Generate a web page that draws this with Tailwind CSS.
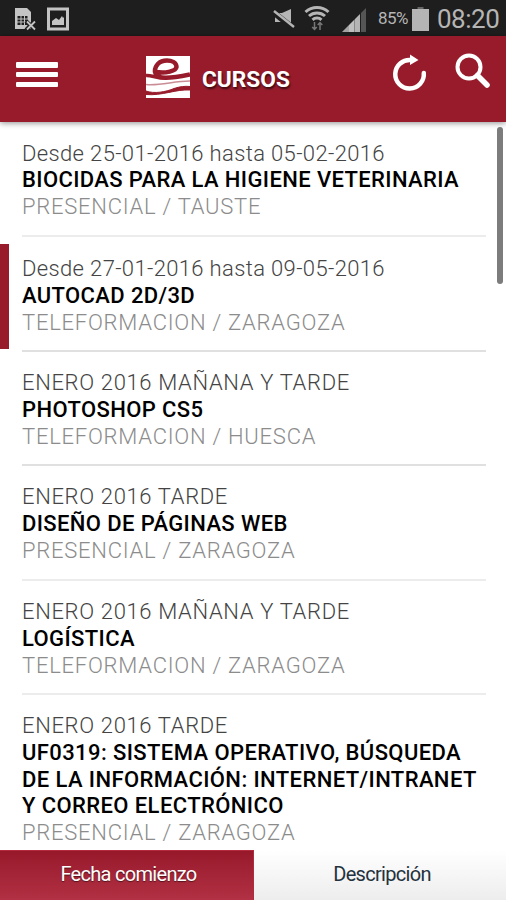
<!DOCTYPE html>
<html lang="es">
<head>
    <meta charset="UTF-8">
    <meta name="viewport" content="width=device-width, initial-scale=1.0">
    <title>Cursos</title>
    <script src="https://cdn.jsdelivr.net/npm/@tailwindcss/browser@4"></script>
</head>
<body class="bg-white font-[Roboto,sans-serif]">
    <div class="relative flex flex-col h-[900px] w-[506px] overflow-hidden">
        <!-- Status bar -->
        <div class="flex h-9 shrink-0 items-center bg-[#1e1e1e] text-[#b5b5b5]">
            <svg class="ml-3.5 mt-0.5 h-6 w-[22px]" viewBox="0 0 22 24">
                <path d="M1 1h12l4 4v17H1z" fill="#c4c4c4"/>
                <path d="M3.5 9h10v9h-10z" fill="#1e1e1e"/>
                <path d="M3 12h11M3 15h11M7 8v10M10.500 8v10" stroke="#c4c4c4" stroke-width="1"/>
                <path d="M12 14l9 9M21 14l-9 9" stroke="#1e1e1e" stroke-width="4"/>
                <path d="M13 14.500l8 8M21 14.500l-8 8" stroke="#c4c4c4" stroke-width="1.800"/>
            </svg>
            <svg class="ml-[11px] mt-0.5 h-6 w-[22px]" viewBox="0 0 22 24">
                <path d="M1.500 2h19v20h-19z" fill="none" stroke="#c4c4c4" stroke-width="3"/>
                <path d="M5 18v-4l4-3 3 2 3-4 1 2 1-1v8z" fill="#c4c4c4"/>
            </svg>
            <svg class="ml-[204px] h-6 w-[22px]" viewBox="0 0 22 24">
                <path d="M2 7h7l9-4v17l-9-4H2z" fill="#b5b5b5"/>
                <path d="M0 6l20 16" stroke="#1e1e1e" stroke-width="6"/>
                <path d="M1 5l20 16" stroke="#b5b5b5" stroke-width="2.500"/>
            </svg>
            <svg class="ml-[9px] h-[26px] w-[26px]" viewBox="0 0 26 26">
                <g fill="none" stroke="#b5b5b5" stroke-width="3">
                    <path d="M1.500 7a17 17 0 0 1 23 0"/>
                    <path d="M5 11a12 12 0 0 1 16 0"/>
                    <path d="M8.500 14.800a6.500 6.500 0 0 1 9 0"/>
                </g>
                <path d="M10.500 17v7M8.200 22l2.300 2.500 2.300-2.500M16 25v-7M13.700 20l2.300-2.500 2.300 2.500" fill="none" stroke="#777" stroke-width="1.500"/>
            </svg>
            <svg class="ml-3 mt-1 h-6 w-[26px]" viewBox="0 0 26 24">
                <path d="M0 24l7-7v7z" fill="#a5a5a5"/>
                <path d="M7 17l5-5v12H7z" fill="#c0c0c0"/>
                <path d="M12 12l1-1v13h-1z" fill="#888"/>
                <path d="M13 11l5-5v18h-5z" fill="#b5b5b5"/>
                <path d="M19 5l5-5v24h-5z" fill="#555"/>
            </svg>
            <span class="ml-[10px] mt-0.5 w-[34px] text-[17px] tracking-[-0.6px]">85%</span>
            <svg class="mt-0.5 h-6 w-[17px]" viewBox="0 0 17 24">
                <path d="M5.500 0h6v2h-6z" fill="#666"/>
                <path d="M0 2h17v22H0z" fill="#b5b5b5"/>
            </svg>
            <span class="ml-2 mt-px text-[26px] leading-9 tracking-[-0.5px]">08:20</span>
        </div>

        <!-- Header -->
        <header class="relative z-10 flex h-[86px] shrink-0 bg-[#981b2b] shadow-[0_1px_6px_rgba(0,0,0,0.45)]">
            <div class="ml-4 mt-[26px] flex h-[25px] w-[42px] flex-col justify-between">
                <div class="h-[5.500px] rounded-[1px] bg-white"></div>
                <div class="h-[5.500px] rounded-[1px] bg-white"></div>
                <div class="h-[5.500px] rounded-[1px] bg-white"></div>
            </div>
            <svg class="ml-[88px] mt-5 h-[42px] w-[44px]" viewBox="0 0 44 42">
                <path d="M0 0h44v42H0z" fill="#fff"/>
                <g fill="none" stroke="#981b2b">
                    <path d="M10 16C20 17.500 30 15 30.500 11C30.500 6 25 4.500 21 4.500C13 4.500 8.500 10 9 16C10 24 24 22.500 44 18.500" stroke-width="4.500"/>
                    <path d="M0 19.500C6 19 10 22.500 20 22" stroke-width="3.500"/>
                    <path d="M0 28.500C14 30 28 25 44 25" stroke-width="1.500" opacity="0.500"/>
                    <path d="M0 35C8 38 20 36 28 32.500C34 30.500 39 30 44 30.500V34C30 33 16 40 0 38.500z" fill="#981b2b" stroke-width="1"/>
                </g>
            </svg>
            <h1 class="ml-3 mt-[30px] w-[88px] text-[22.700px] leading-[27px] font-bold text-white [text-shadow:1px_2px_2px_rgba(0,0,0,0.6)]">CURSOS</h1>
            <svg class="ml-[101px] mt-4 h-10 w-9" viewBox="0 0 36 40">
                <path d="M20 8A14.300 14.300 0 1 0 32.800 21" fill="none" stroke="#fff" stroke-width="4.500" stroke-linecap="round"/>
                <path d="M19 2.500l8.500 5.500-8.500 5z" fill="#fff"/>
            </svg>
            <svg class="ml-[28px] mt-4 h-9 w-9" viewBox="0 0 36 36">
                <circle cx="14" cy="15" r="11.500" fill="none" stroke="#fff" stroke-width="4"/>
                <path d="M22.500 23.500l9.500 9.500" stroke="#fff" stroke-width="5.500" stroke-linecap="round"/>
            </svg>
        </header>

        <!-- Course list -->
        <main class="relative h-[728px] shrink-0 overflow-hidden text-[22px] leading-[26.800px]">
            <ul>
                <li class="mr-5 ml-[22px] h-[115px] border-b-2 border-[#ececec] pt-[18.500px]">
                    <p><span class="font-light tracking-[0.36px] text-[#444]">Desde 25-01-2016 hasta 05-02-2016</span></p>
                    <p><span class="font-medium tracking-[0.38px] text-black">BIOCIDAS PARA LA HIGIENE VETERINARIA</span></p>
                    <p><span class="font-light tracking-[0.75px] text-[#8c8c8c]">PRESENCIAL / TAUSTE</span></p>
                </li>
                <li class="relative mr-5 ml-[22px] h-[114.500px] border-b-2 border-[#e0e0e0] pt-[19px]">
                    <div class="absolute -left-[22px] top-[7px] h-[105px] w-[9px] bg-[#981b2b]"></div>
                    <p><span class="font-light tracking-[0.36px] text-[#444]">Desde 27-01-2016 hasta 09-05-2016</span></p>
                    <p><span class="font-medium tracking-[0.38px] text-black">AUTOCAD 2D/3D</span></p>
                    <p><span class="font-light tracking-[0.75px] text-[#8c8c8c]">TELEFORMACION / ZARAGOZA</span></p>
                </li>
                <li class="mr-5 ml-[22px] h-[114.500px] border-b-2 border-[#e0e0e0] pt-[18.500px]">
                    <p><span class="font-light tracking-[0.65px] text-[#444]">ENERO 2016 MAÑANA Y TARDE</span></p>
                    <p><span class="font-medium tracking-[0.38px] text-black">PHOTOSHOP CS5</span></p>
                    <p><span class="font-light tracking-[0.75px] text-[#8c8c8c]">TELEFORMACION / HUESCA</span></p>
                </li>
                <li class="mr-5 ml-[22px] h-[114.500px] border-b-2 border-[#ececec] pt-[18px]">
                    <p><span class="font-light tracking-[0.65px] text-[#444]">ENERO 2016 TARDE</span></p>
                    <p><span class="font-medium tracking-[0.38px] text-black">DISEÑO DE PÁGINAS WEB</span></p>
                    <p><span class="font-light tracking-[0.75px] text-[#8c8c8c]">PRESENCIAL / ZARAGOZA</span></p>
                </li>
                <li class="mr-5 ml-[22px] h-[114.500px] border-b-2 border-[#ececec] pt-[18.500px]">
                    <p><span class="font-light tracking-[0.65px] text-[#444]">ENERO 2016 MAÑANA Y TARDE</span></p>
                    <p><span class="font-medium tracking-[0.38px] text-black">LOGÍSTICA</span></p>
                    <p><span class="font-light tracking-[0.75px] text-[#8c8c8c]">TELEFORMACION / ZARAGOZA</span></p>
                </li>
                <li class="mr-5 ml-[22px] pt-[18px]">
                    <p><span class="font-light tracking-[0.65px] text-[#444]">ENERO 2016 TARDE</span></p>
                    <p class="whitespace-nowrap"><span class="font-medium tracking-[0.4px] text-black">UF0319: SISTEMA OPERATIVO, BÚSQUEDA<br>DE LA INFORMACIÓN: INTERNET/INTRANET<br>Y CORREO ELECTRÓNICO</span></p>
                    <p><span class="font-light tracking-[0.75px] text-[#8c8c8c]">PRESENCIAL / ZARAGOZA</span></p>
                </li>
            </ul>
            <div class="absolute left-[497px] top-[5px] h-[157px] w-[6px] rounded-full bg-[#7c7c7c]"></div>
        </main>

        <!-- Sort tabs -->
        <nav class="flex h-[50px] shrink-0 text-[20px] tracking-[-0.700px]">
            <div class="flex w-[254px] items-center justify-center border-t border-r border-[#b32a3c] bg-linear-to-b from-[#96182a] to-[#b23144] pb-1 pl-1 text-white [text-shadow:0_1px_1px_rgba(0,0,0,0.5)]">Fecha comienzo</div>
            <div class="flex flex-1 items-center justify-center bg-linear-to-b from-white to-[#ededed] pb-0.5 pl-1 text-[#24323d]">Descripción</div>
        </nav>
    </div>
</body>
</html>
